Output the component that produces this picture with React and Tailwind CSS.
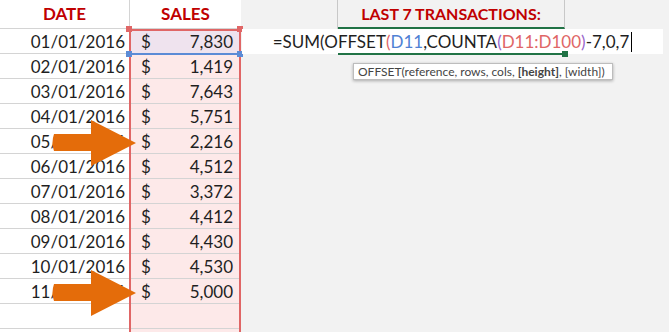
import React from 'react';

const rows = [
  ['01/01/2016', '7,830'],
  ['02/01/2016', '1,419'],
  ['03/01/2016', '7,643'],
  ['04/01/2016', '5,751'],
  ['05/01/2016', '2,216'],
  ['06/01/2016', '4,512'],
  ['07/01/2016', '3,372'],
  ['08/01/2016', '4,412'],
  ['09/01/2016', '4,430'],
  ['10/01/2016', '4,530'],
  ['11/01/2016', '5,000'],
  ['', ''],
  ['', ''],
];

const Arrow = ({ top }) => (
  <svg
    className="absolute left-[50px]"
    style={{ top }}
    width="88"
    height="50"
    viewBox="0 0 88 50"
  >
    <path d="M4 16 L41 16 L41 2 L86 25 L41 48 L41 33 L4 33 Q1 24.5 4 16 Z" fill="#e46c0a" />
  </svg>
);

const Handle = ({ className }) => (
  <div className={`absolute w-[6px] h-[6px] ${className}`} />
);

const App = () => {
  return (
    <div className="relative flex w-[669px] h-[332px] overflow-hidden bg-[#f2f2f2] font-['Lato','Liberation_Sans',sans-serif] text-[#1f1f1f]">
      {/* left table */}
      <div className="relative w-[241px] shrink-0 bg-white">
        <div className="flex h-[29px] border-b border-[#d4d4d4]">
          <div className="w-[130px] border-r border-[#d4d4d4] flex items-center justify-center text-[17px] font-bold text-[#c00000]">
            DATE
          </div>
          <div className="flex-1 flex items-center justify-center text-[17px] font-bold text-[#c00000]">
            SALES
          </div>
        </div>
        {rows.map(([d, v], i) => (
          <div key={i} className="flex h-[25px] border-b border-[#d4d4d4]">
            <div className="w-[130px] border-r border-[#d4d4d4] flex items-center justify-end pr-[4px] text-[17px] leading-none">
              {d}
            </div>
            <div
              className={`flex-1 flex items-center justify-between pl-[11px] pr-[8px] text-[17px] leading-none ${
                i === 0 ? 'bg-[#efe3ee]' : 'bg-[#fde9e9]'
              }`}
            >
              <span>{v ? '$' : ''}</span>
              <span>{v}</span>
            </div>
          </div>
        ))}
        {/* range highlight borders */}
        <div className="absolute left-[129px] top-[29px] w-[112px] h-[310px] border-2 border-b-0 border-[#e06666]" />
        <div className="absolute left-[131px] top-[53px] w-[109px] h-[2px] bg-[#5b8bd6]" />
        <Handle className="left-[126px] top-[26px] bg-[#e06666]" />
        <Handle className="left-[237px] top-[26px] bg-[#e06666]" />
        <Handle className="left-[126px] top-[51px] bg-[#5b8bd6]" />
        <Handle className="left-[237px] top-[51px] bg-[#5b8bd6]" />
      </div>

      {/* right area */}
      <div className="flex-1 flex flex-col">
        <div className="flex h-[29px]">
          <div className="w-[97px] border-r border-[#c8c8c8]" />
          <div className="w-[227px] border-r border-[#c8c8c8] border-b-2 border-b-[#217346] flex items-center justify-center text-[16px] font-bold text-[#c00000]">
            LAST 7 TRANSACTIONS:
          </div>
          <div className="flex-1" />
        </div>
        <div className="relative h-[25px] w-[421px] ml-[1px] bg-white flex items-center justify-center text-[17px] leading-none">
          <span>
            =SUM(OFFSET<span className="text-[#e06666]">(</span>
            <span className="text-[#4f81d4]">D11</span>,COUNTA
            <span className="text-[#9966cc]">(</span>
            <span className="text-[#e06666]">D11:D100</span>
            <span className="text-[#9966cc]">)</span>-7,0,7
          </span>
          <span className="ml-[2px] w-px h-[20px] bg-black" />
          <div className="absolute left-[96px] top-[24px] w-[228px] h-[2px] bg-[#217346]" />
          <div className="absolute left-[320px] top-[22px] w-[6px] h-[6px] bg-[#217346]" />
        </div>
        <div className="mt-[9px] ml-[112px] w-[260px] h-[17px] bg-white border border-[#bdbdbd] shadow-[0_1px_3px_rgba(0,0,0,0.3)] flex items-center px-[4px] text-[12px] leading-none text-[#444] whitespace-nowrap">
          OFFSET(reference, rows, cols, <b className="ml-[3px]">[height]</b>, [width])
        </div>
      </div>

      <Arrow top={118} />
      <Arrow top={268} />
    </div>
  );
};

export default App;
